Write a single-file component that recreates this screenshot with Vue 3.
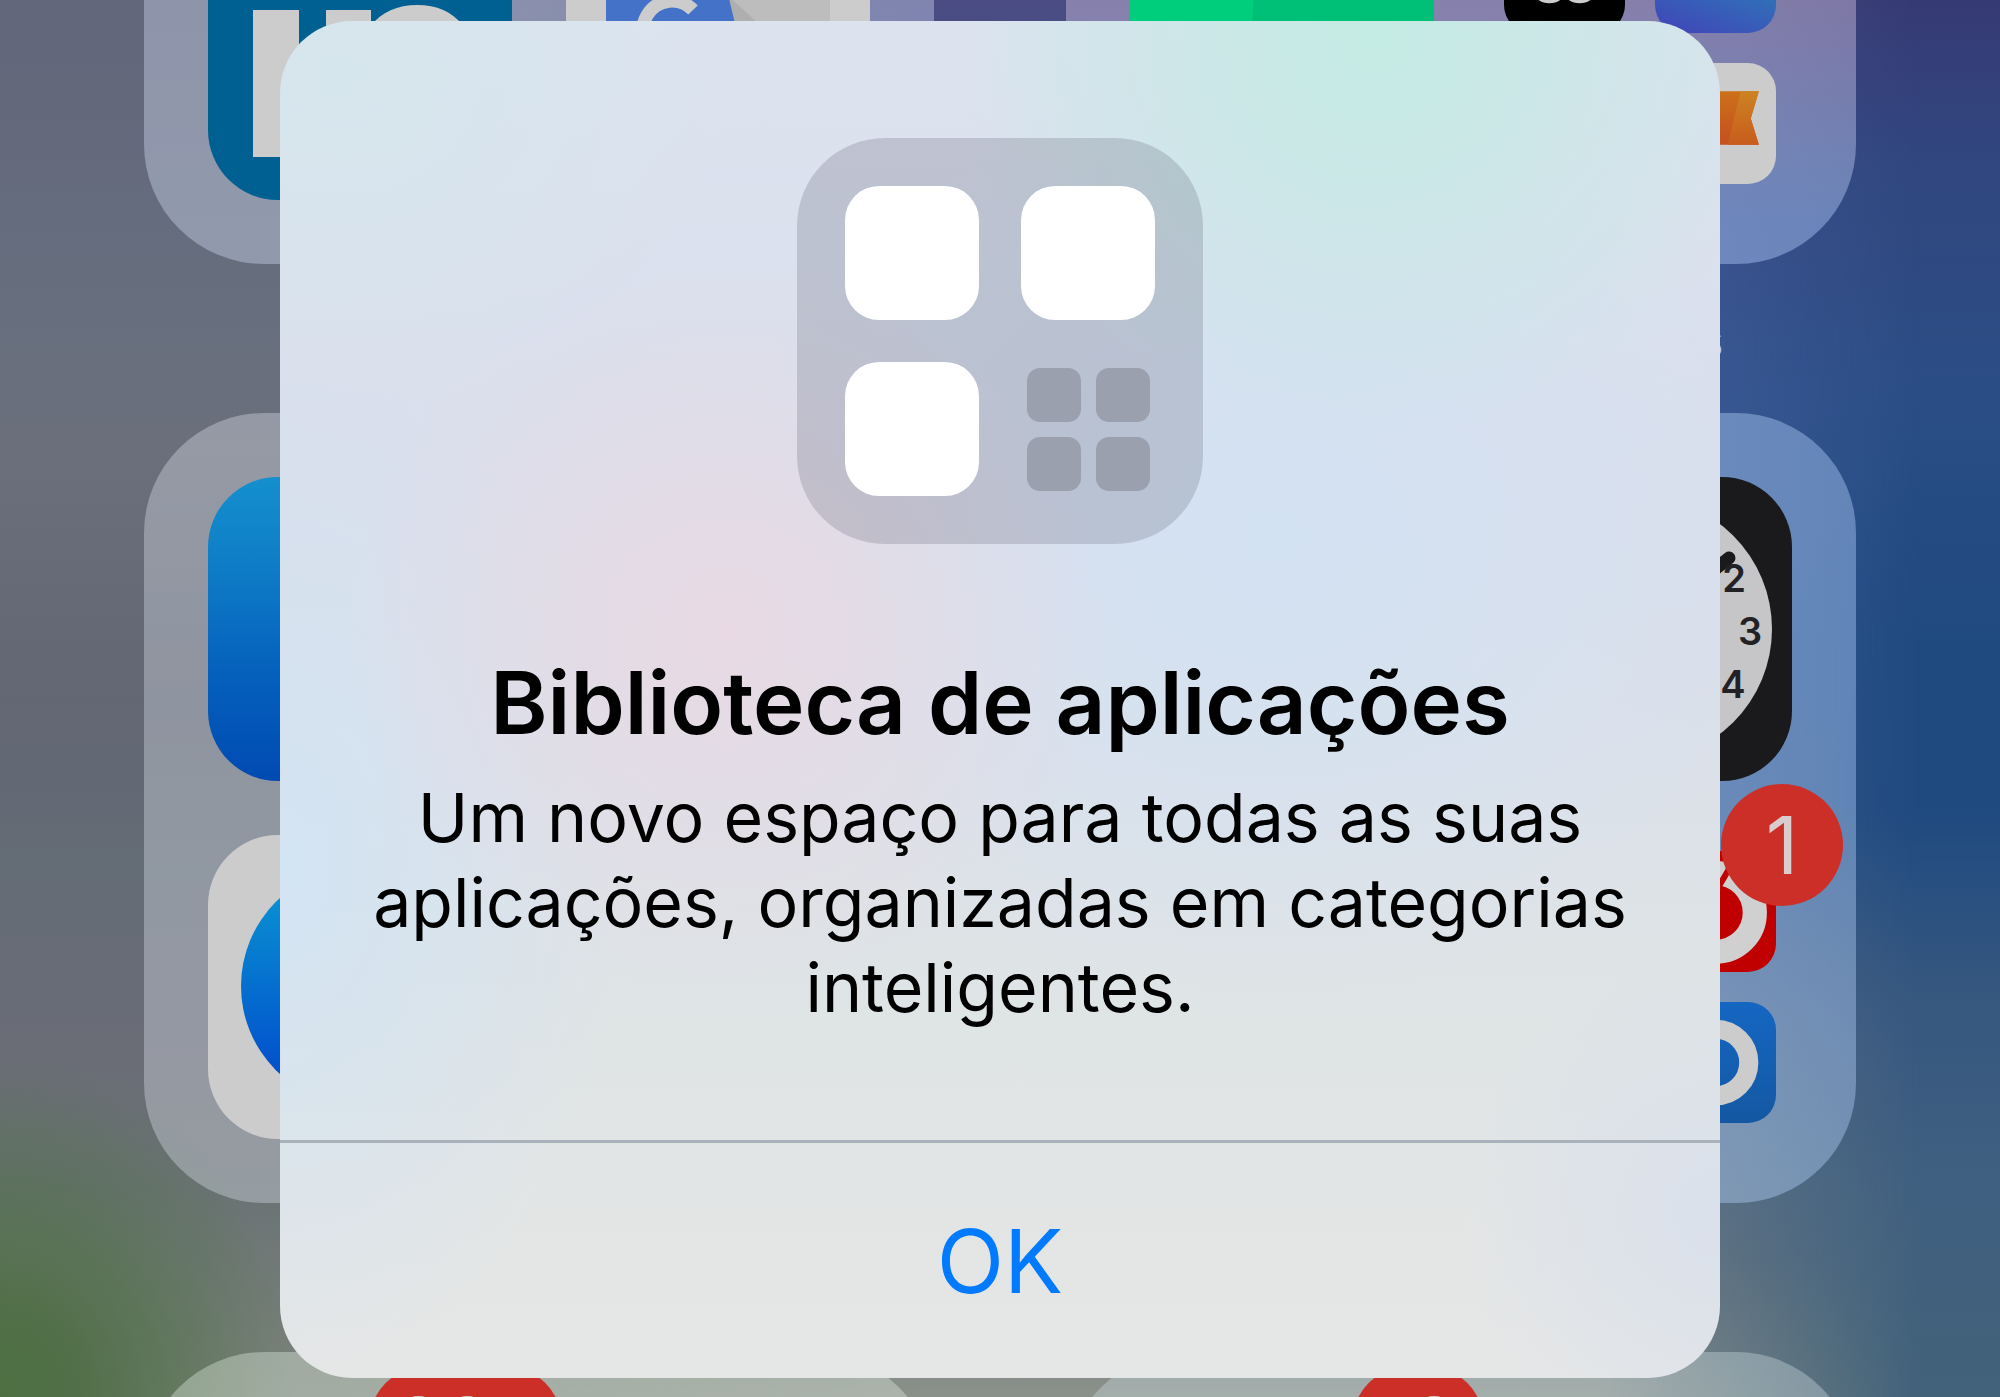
<script setup>
const topMinis = ['black', 'azure', 'plain', 'paper']
const quads = [1, 2, 3, 4]
</script>

<template>
  <main class="page">
    <div class="home" aria-hidden="true">
      <div class="row">
        <div class="folder">
          <i class="slot blank"></i><i class="slot blank"></i>
          <svg class="slot" viewBox="0 0 304 304">
            <rect width="304" height="304" rx="70" fill="#006091" />
            <path d="M45 114h46v147H45z" fill="#ccc" />
            <path d="M118 261V114h45v16c10-14 27-21 46-21 40 0 60 28 60 72v80h-47v-74c0-23-9-35-26-35s-30 12-30 35v74z" fill="#ccc" />
          </svg>
          <svg class="slot" viewBox="0 0 304 304">
            <rect width="304" height="304" rx="70" fill="#ccc" />
            <path d="M130 40h134v220H190z" fill="#bdbdbd" />
            <path d="M160 98l44 40h-34z" fill="#afafaf" />
            <path d="M40 40h108l24 100 24 120H40z" fill="#4472c8" />
            <path d="M127 114a29 29 0 1 0 8 20h-26" fill="none" stroke="#ccc" stroke-width="13" />
          </svg>
        </div>
        <div class="folder">
          <i class="slot blank"></i><i class="slot blank"></i>
          <svg class="slot" viewBox="0 0 304 304">
            <rect width="304" height="304" rx="70" fill="#00ce7c" />
            <path d="M128 0h106a70 70 0 0 1 70 70v164a70 70 0 0 1-70 70H115z" fill="#00bf76" />
          </svg>
          <div class="slot minis">
            <svg v-for="kind in topMinis" :key="kind" class="mini" :class="kind" viewBox="0 0 120 120">
              <g v-if="kind === 'black'" fill="none" stroke="#ccc" stroke-width="9">
                <circle cx="45" cy="71" r="15" /><circle cx="75" cy="71" r="15" />
              </g>
              <template v-if="kind === 'paper'">
                <defs>
                  <linearGradient id="flag" x1="0" y1="0" x2="0" y2="1">
                    <stop offset="0" stop-color="#cc701a" /><stop offset="1" stop-color="#c4501f" />
                  </linearGradient>
                  <linearGradient id="fold" x1="0" y1="0" x2="0" y2="1">
                    <stop offset="0" stop-color="#cc8322" /><stop offset="1" stop-color="#c85c1e" />
                  </linearGradient>
                </defs>
                <path d="M20 28h83l-8 27 8 26H20z" fill="url(#flag)" />
                <path d="M85 28h18l-8 27 8 26H72z" fill="url(#fold)" />
              </template>
            </svg>
          </div>
          <span class="caption">s</span>
        </div>
      </div>

      <div class="row">
        <div class="folder">
          <i class="slot sky"></i><i class="slot blank"></i>
          <svg class="slot" viewBox="0 0 304 304">
            <defs>
              <linearGradient id="compass" x1="0" y1="0" x2="0" y2="1">
                <stop offset="0" stop-color="#0a9ad2" /><stop offset="1" stop-color="#0044cc" />
              </linearGradient>
            </defs>
            <rect width="304" height="304" rx="70" fill="#ccc" />
            <circle cx="152" cy="151" r="119" fill="url(#compass)" />
          </svg>
          <i class="slot blank"></i>
        </div>
        <div class="folder">
          <i class="slot blank"></i>
          <svg class="slot clock" viewBox="0 0 304 304">
            <rect width="304" height="304" rx="70" fill="#1a1a1c" />
            <circle cx="152" cy="152" r="132" fill="#c6c6c8" />
            <path d="M152 152L241 81" stroke="#1a1a1c" stroke-width="13" stroke-linecap="round" />
            <text x="246" y="115">2</text>
            <text x="262" y="168">3</text>
            <text x="245" y="221">4</text>
          </svg>
          <i class="slot blank"></i>
          <div class="slot minis">
            <i class="mini blank"></i>
            <div class="mini badged">
              <svg viewBox="0 0 120 120">
                <rect width="120" height="120" rx="28" fill="#c00000" />
                <circle cx="60" cy="61" r="39" fill="none" stroke="#d0d0d0" stroke-width="24" />
                <path d="M64 34l14-24" stroke="#c00000" stroke-width="6" />
              </svg>
              <b class="badge">1</b>
            </div>
            <i class="mini blank"></i>
            <svg class="mini deep" viewBox="0 0 120 120">
              <circle cx="60" cy="60" r="33" fill="none" stroke="#ccc" stroke-width="19" />
            </svg>
          </div>
        </div>
      </div>

      <div class="row">
        <div class="folder">
          <div class="slot badged"><b class="badge">227</b></div>
        </div>
        <div class="folder">
          <div class="slot badged"><b class="badge">18</b></div>
        </div>
      </div>
    </div>

    <section class="dialog" role="alertdialog" aria-labelledby="title" aria-describedby="message">
      <div class="body">
        <div class="library">
          <i class="tile"></i><i class="tile"></i><i class="tile"></i>
          <div class="cluster"><i v-for="q in quads" :key="q"></i></div>
        </div>
        <h1 id="title">Biblioteca de aplicações</h1>
        <p id="message">Um novo espaço para todas as suas aplicações, organizadas em categorias inteligentes.</p>
      </div>
      <button type="button" class="ok">OK</button>
    </section>
  </main>
</template>

<style>
body {
  margin: 0;
}
</style>

<style scoped>
.page {
  position: relative;
  box-sizing: border-box;
  min-height: 100vh;
  padding: 21px 24px 19px;
  overflow: hidden;
  font-family: Inter, "Liberation Sans", sans-serif;
  background: linear-gradient(180deg, #363a74 0, #31477f 12%, #2b4d86 28%, #1f4a80 46%, #1f4a80 58%, #37587f 72%, #3f6080 85%, #42627a 100%);
}

.page::before,
.page::after {
  content: "";
  position: absolute;
  inset: 0;
}

/* middle band of the wallpaper */
.page::before {
  background: linear-gradient(180deg, #4a4c82 0, #3f5592 14%, #3f5c98 25%, #41629c 45%, #44608f 60%, #60728a 76%, #6e7b84 90%, #8b918a 100%);
  mask-image: linear-gradient(90deg, #000 80%, transparent 96%);
}

/* left side of the wallpaper */
.page::after {
  background:
    radial-gradient(ellipse 300px 340px at 0 100%, #4d6f41 0, #52704a 28%, rgba(92, 114, 92, 0) 100%),
    linear-gradient(180deg, #62667a 0, #666e7e 20%, #6a6f7b 32%, #626773 50%, #646c76 62%, #6a6c76 75%, #6a7375 85%, #7c847c 100%);
  mask-image: linear-gradient(90deg, #000 16%, transparent 46%);
}

.home {
  position: absolute;
  z-index: 1;
  inset: 0;
  overflow: hidden;
}

.row {
  display: flex;
  justify-content: center;
  gap: 132px;
  margin-bottom: 149px;
}

.row:first-child {
  margin-top: -526px;
}

.folder {
  position: relative;
  box-sizing: border-box;
  flex: none;
  display: grid;
  grid-template-columns: 304px 304px;
  grid-auto-rows: 304px;
  gap: 54px;
  width: 790px;
  height: 790px;
  padding: 64px;
  border-radius: 120px;
  background: rgba(240, 245, 255, 0.32);
}

.folder:nth-child(2) {
  background: rgba(185, 215, 255, 0.4);
}

.row:first-child .folder {
  background: rgba(215, 225, 250, 0.38);
}

.row:first-child .folder:nth-child(2) {
  background: linear-gradient(0deg, rgba(185, 210, 255, 0.42) 6%, rgba(215, 195, 225, 0.44) 34%);
}

.row:nth-child(3) .folder {
  background: rgba(225, 240, 225, 0.38);
}

.row:nth-child(3) .folder:nth-child(2) {
  background: rgba(205, 220, 225, 0.38);
}

.slot {
  width: 304px;
  height: 304px;
}

.sky {
  border-radius: 70px;
  background: linear-gradient(#158fce 0, #0f80c8 25%, #0560bc 65%, #004ab2 100%);
}

.minis {
  box-sizing: border-box;
  display: grid;
  grid-template-columns: 121px 121px;
  grid-auto-rows: 121px;
  gap: 30px;
  padding: 16px;
}

.mini {
  width: 121px;
  height: 121px;
  border-radius: 28px;
}

.mini svg {
  display: block;
}

.black {
  background: #000;
}

.azure {
  background: linear-gradient(200deg, #2b7cb8 40%, #4048b8 95%);
}

.paper {
  background: #ccc;
}

.deep {
  background: linear-gradient(#1566c2, #1458a2);
}

.clock text {
  font-size: 38px;
  font-weight: 600;
  text-anchor: middle;
  fill: #222226;
}

.badged {
  position: relative;
}

.badge {
  position: absolute;
  top: -67px;
  right: -67px;
  box-sizing: border-box;
  min-width: 122px;
  height: 122px;
  padding: 0 26px;
  border-radius: 61px;
  background: #cc2f27;
  color: #d9cccc;
  font-size: 80px;
  font-weight: 400;
  line-height: 122px;
  text-align: center;
}

.slot > .badge {
  top: -51px;
  right: -51px;
}

.caption {
  position: absolute;
  top: 834px;
  right: 132px;
  font-size: 52px;
  line-height: 64px;
  color: #b9c4dc;
}

.dialog {
  position: relative;
  z-index: 2;
  max-width: 1440px;
  margin: 0 auto;
  border-radius: 72px;
  overflow: hidden;
  text-align: center;
  color: #000;
  background:
    radial-gradient(ellipse 420px 400px at 76% 1%, #c3ebe3 0, rgba(196, 234, 228, 0.7) 35%, rgba(204, 228, 234, 0) 100%),
    radial-gradient(ellipse 380px 360px at 31% 45%, #e8d9e3 0, rgba(230, 218, 228, 0.6) 45%, rgba(224, 221, 232, 0) 100%),
    radial-gradient(ellipse 540px 460px at 69% 38%, #d3e2f3 0, rgba(215, 226, 240, 0) 100%),
    radial-gradient(ellipse 340px 520px at 0 62%, #d3e4f3 0, rgba(215, 228, 240, 0) 100%),
    radial-gradient(ellipse 400px 340px at 4% 4%, #d6e6ed 0, rgba(218, 228, 238, 0) 100%),
    radial-gradient(ellipse 260px 260px at 100% 88%, #dae1ec 0, rgba(222, 227, 233, 0) 100%),
    linear-gradient(180deg, #dce3ef 0, #dadfec 35%, #dce1e9 55%, #dfe4e5 74%, #e3e5e5 88%, #e5e6e6 100%);
}

.body {
  padding: 117px 68px 110px;
  border-bottom: 3px solid #a9b1bb;
}

.library {
  box-sizing: border-box;
  display: grid;
  grid-template-columns: 134px 134px;
  grid-auto-rows: 134px;
  gap: 42px;
  width: 406px;
  height: 406px;
  margin: 0 auto;
  padding: 48px;
  border-radius: 88px;
  background: rgba(70, 70, 90, 0.2);
}

.tile {
  border-radius: 34px;
  background: #fff;
}

.cluster {
  display: grid;
  grid-template-columns: 54px 54px;
  grid-auto-rows: 54px;
  place-content: center;
  gap: 15px;
}

.cluster i {
  border-radius: 13px;
  background: #9aa0ad;
}

h1 {
  margin: 107px 0 0;
  font-size: 87px;
  font-weight: 600;
  line-height: 104px;
}

p {
  margin: 20px 0 0;
  font-size: 68px;
  font-weight: 400;
  line-height: 85px;
}

.ok {
  display: block;
  width: 100%;
  height: 235px;
  padding: 0;
  border: 0;
  background: transparent;
  color: #007aff;
  font-family: inherit;
  font-size: 88px;
  font-weight: 400;
}
</style>
